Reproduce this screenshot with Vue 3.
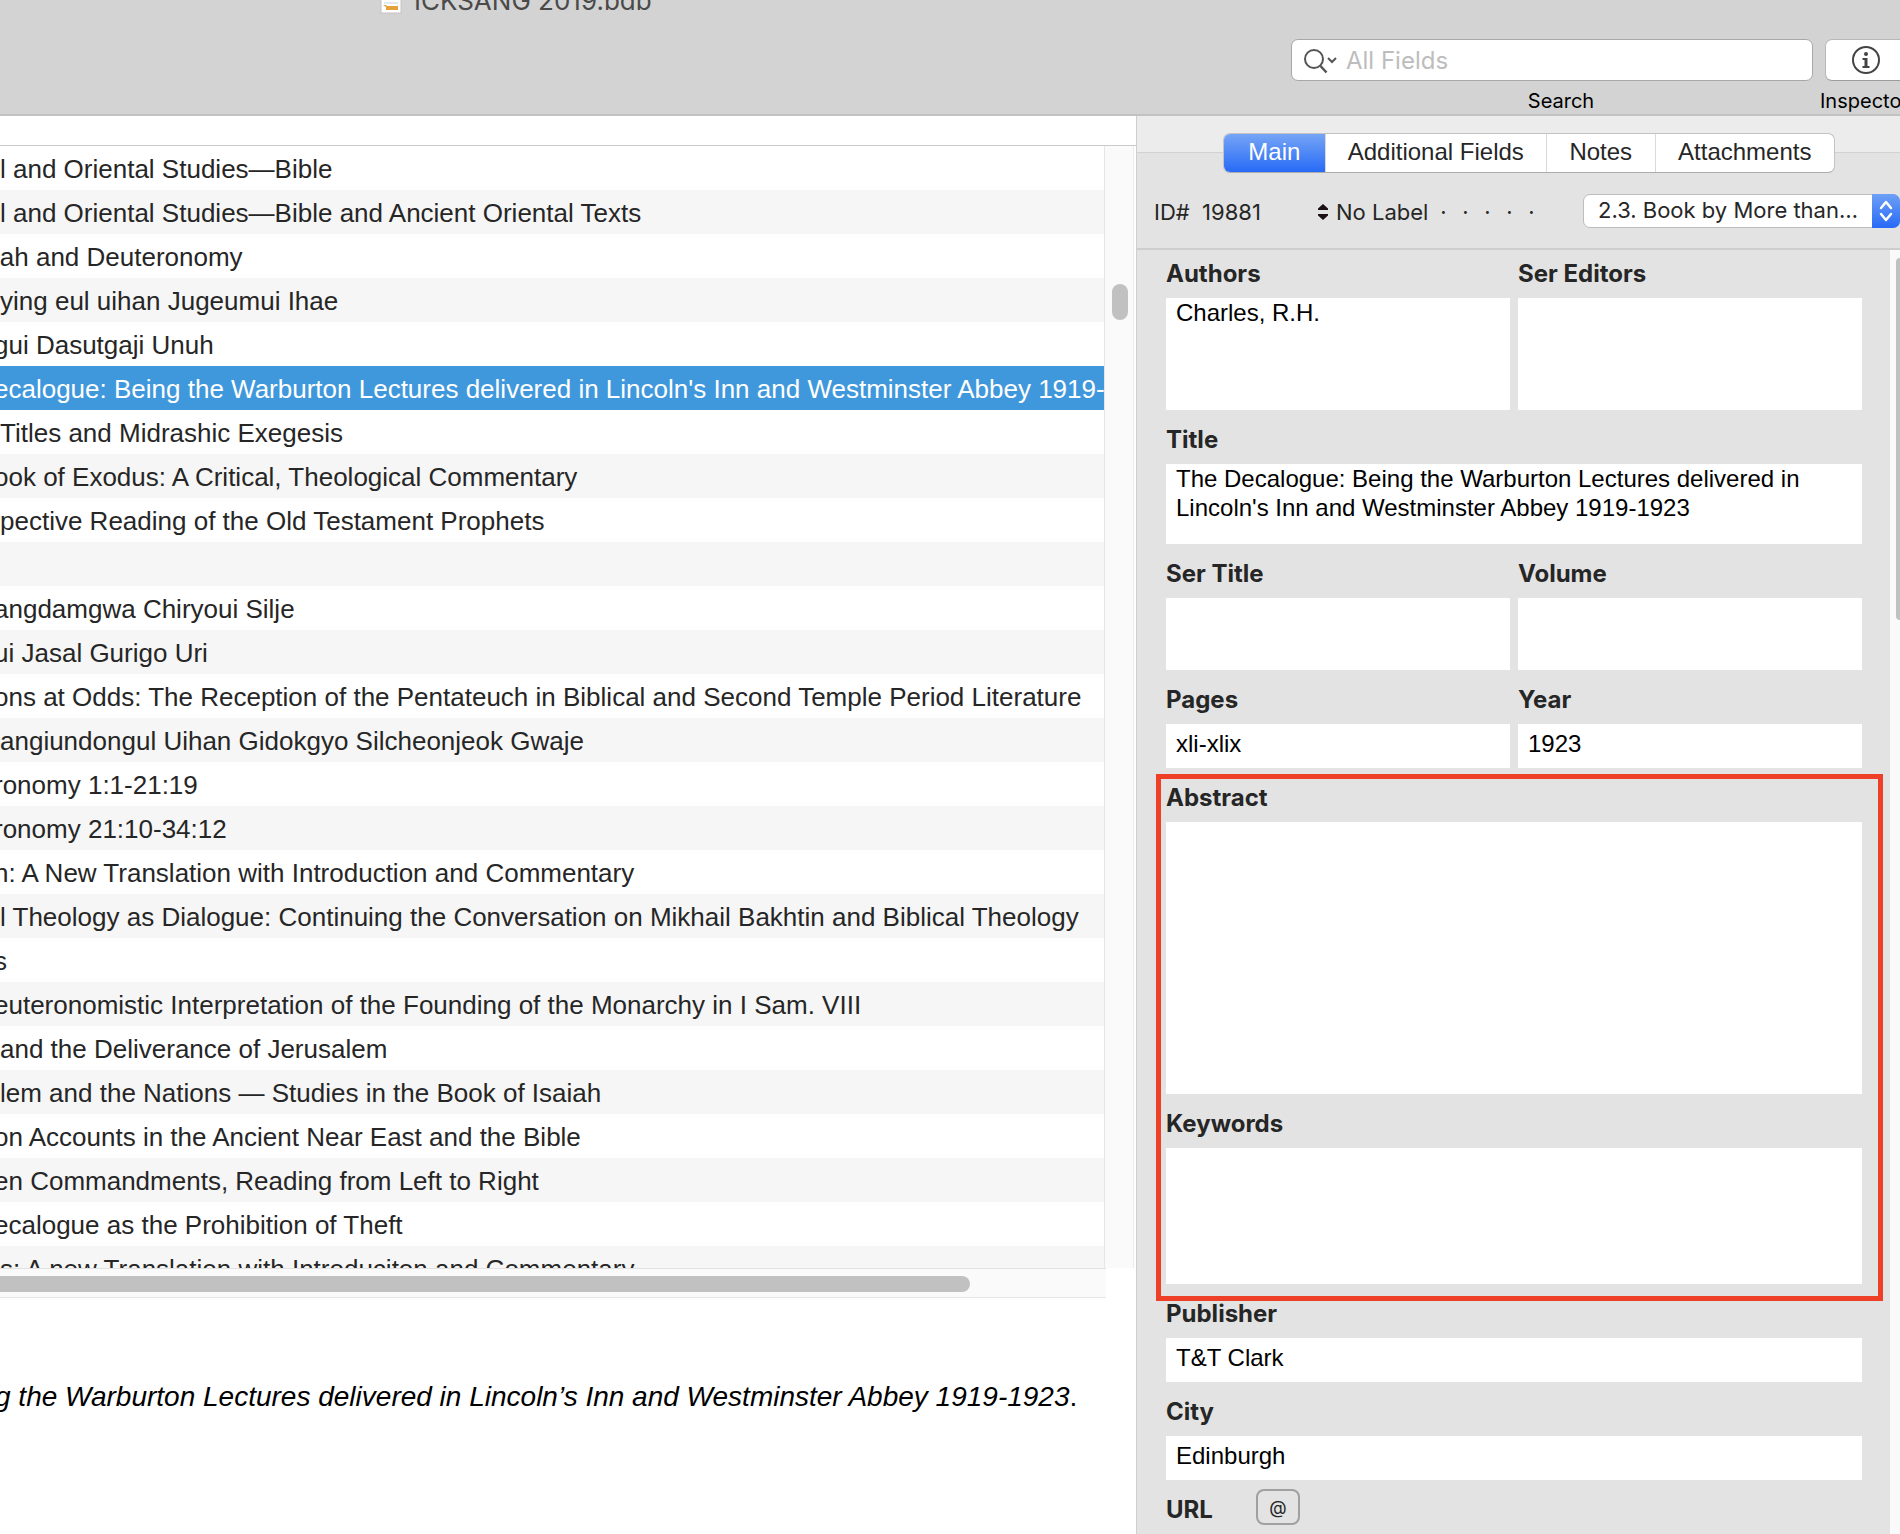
<script setup>
import { ref } from 'vue'

const references = [
  { title: 'l and Oriental Studies—Bible' },
  { title: 'l and Oriental Studies—Bible and Ancient Oriental Texts' },
  { title: 'iah and Deuteronomy', cut: true },
  { title: 'ying eul uihan Jugeumui Ihae' },
  { title: 'gui Dasutgaji Unuh', cut: true },
  { title: "ecalogue: Being the Warburton Lectures delivered in Lincoln's Inn and Westminster Abbey 1919-", cut: true },
  { title: 'Titles and Midrashic Exegesis' },
  { title: 'ook of Exodus: A Critical, Theological Commentary', cut: true },
  { title: 'pective Reading of the Old Testament Prophets' },
  { title: '' },
  { title: 'angdamgwa Chiryoui Silje', cut: true },
  { title: 'ui Jasal Gurigo Uri', cut: true },
  { title: 'ons at Odds: The Reception of the Pentateuch in Biblical and Second Temple Period Literature', cut: true },
  { title: 'angiundongul Uihan Gidokgyo Silcheonjeok Gwaje' },
  { title: 'ronomy 1:1-21:19', cut: true },
  { title: 'ronomy 21:10-34:12', cut: true },
  { title: 'n: A New Translation with Introduction and Commentary', cut: true },
  { title: 'l Theology as Dialogue: Continuing the Conversation on Mikhail Bakhtin and Biblical Theology' },
  { title: 's', cut: true },
  { title: 'euteronomistic Interpretation of the Founding of the Monarchy in I Sam. VIII', cut: true },
  { title: 'and the Deliverance of Jerusalem' },
  { title: 'lem and the Nations — Studies in the Book of Isaiah' },
  { title: 'on Accounts in the Ancient Near East and the Bible', cut: true },
  { title: 'en Commandments, Reading from Left to Right', cut: true },
  { title: 'ecalogue as the Prohibition of Theft', cut: true },
  { title: 's: A new Translation with Introduciton and Commentary' },
]
const selected = ref(5)

const tabs = ['Main', 'Additional Fields', 'Notes', 'Attachments']
const activeTab = ref('Main')

const search = ref('')
const record = ref({
  authors: 'Charles, R.H.',
  serEditors: '',
  title: "The Decalogue: Being the Warburton Lectures delivered in Lincoln's Inn and Westminster Abbey 1919-1923",
  serTitle: '',
  volume: '',
  pages: 'xli-xlix',
  year: '1923',
  abstract: '',
  keywords: '',
  publisher: 'T&T Clark',
  city: 'Edinburgh',
})
</script>

<template>
  <div class="window">
    <header class="toolbar">
      <div class="doc-title">
        <svg class="doc-icon" width="22" height="26" viewBox="0 0 22 26" aria-hidden="true">
          <rect x="1" y="0" width="20" height="25" fill="#fff" stroke="#c4c4c4" />
          <path d="M4 11h14M4 15h14" stroke="#c9d3dc" stroke-width="1" />
          <path d="M3 17h3l1 1h11v4H6v-3z" fill="#e5a23c" />
        </svg>
        <span>ICKSANG 2019.bdb</span>
      </div>
      <div class="tool search-tool">
        <div class="search-box">
          <svg width="36" height="30" viewBox="0 0 36 30" fill="none" stroke="#555" stroke-width="2" aria-hidden="true">
            <circle cx="10" cy="14" r="9" />
            <path d="M16.500 21l6 6.500" stroke-width="2.500" />
            <path d="M24 13l4 4 4-4" />
          </svg>
          <input id="search" v-model="search" type="text" placeholder="All Fields" />
        </div>
        <label for="search" class="search-label">Search</label>
      </div>
      <div class="tool inspector-tool">
        <button id="inspector" type="button" class="inspector-button" aria-label="Inspector">
          <svg width="30" height="30" viewBox="0 0 30 30" aria-hidden="true">
            <circle cx="15" cy="15" r="13" fill="none" stroke="#444" stroke-width="2" />
            <circle cx="15" cy="9" r="2" fill="#444" />
            <path d="M11.500 13h5v8h2v2h-7v-2h2v-6h-2z" fill="#444" />
          </svg>
        </button>
        <label for="inspector">Inspector</label>
      </div>
    </header>

    <div class="body">
      <main class="library">
        <div class="list-header"></div>
        <div class="list">
          <div class="rows">
            <table>
              <tbody>
                <tr
                  v-for="(item, i) in references"
                  :key="i"
                  :class="{ selected: i === selected }"
                  @click="selected = i"
                >
                  <td :class="{ cut: item.cut }">{{ item.title }}</td>
                </tr>
              </tbody>
            </table>
          </div>
          <div class="v-track"><div class="v-thumb"></div></div>
        </div>
        <div class="h-track"><div class="h-thumb"></div></div>
        <section class="preview">
          <p><em>g the Warburton Lectures delivered in Lincoln’s Inn and Westminster Abbey 1919-1923</em>.</p>
        </section>
      </main>

      <aside class="inspector">
        <nav class="tab-bar">
          <div class="tabs">
            <button
              v-for="tab in tabs"
              :key="tab"
              type="button"
              :class="{ active: tab === activeTab }"
              @click="activeTab = tab"
            >{{ tab }}</button>
          </div>
        </nav>

        <div class="meta">
          <span class="record-id">ID#&nbsp; 19881</span>
          <button type="button" class="label-button">
            <svg width="10" height="16" viewBox="0 0 10 16" fill="#1d1013" aria-hidden="true">
              <path d="M5 0l5 4.500V6H0V4.500z" />
              <path d="M5 16l5-4.500V10H0v1.500z" />
            </svg>
            No Label
          </button>
          <span class="dots"><i v-for="n in 5" :key="n">·</i></span>
          <div class="type-select">
            <select aria-label="Reference type">
              <option>2.3. Book by More than…</option>
            </select>
            <span class="cap">
              <svg width="14" height="22" viewBox="0 0 14 22" fill="none" stroke="#fff" stroke-width="2.500" stroke-linecap="round" stroke-linejoin="round" aria-hidden="true">
                <path d="M2 8l5-6 5 6M2 14l5 6 5-6" />
              </svg>
            </span>
          </div>
        </div>

        <div class="form-area">
          <form class="fields" @submit.prevent>
            <div class="pair">
              <div class="field">
                <label for="authors">Authors</label>
                <textarea id="authors" v-model="record.authors" class="h-authors"></textarea>
              </div>
              <div class="field">
                <label for="ser-editors">Ser Editors</label>
                <textarea id="ser-editors" v-model="record.serEditors" class="h-authors"></textarea>
              </div>
            </div>
            <div class="field">
              <label for="title">Title</label>
              <textarea id="title" v-model="record.title" class="h-title"></textarea>
            </div>
            <div class="pair">
              <div class="field">
                <label for="ser-title">Ser Title</label>
                <textarea id="ser-title" v-model="record.serTitle" class="h-series"></textarea>
              </div>
              <div class="field">
                <label for="volume">Volume</label>
                <textarea id="volume" v-model="record.volume" class="h-series"></textarea>
              </div>
            </div>
            <div class="pair">
              <div class="field">
                <label for="pages">Pages</label>
                <input id="pages" v-model="record.pages" type="text" />
              </div>
              <div class="field">
                <label for="year">Year</label>
                <input id="year" v-model="record.year" type="text" />
              </div>
            </div>
            <div class="marked">
              <div class="field">
                <label for="abstract">Abstract</label>
                <textarea id="abstract" v-model="record.abstract" class="h-abstract"></textarea>
              </div>
              <div class="field">
                <label for="keywords">Keywords</label>
                <textarea id="keywords" v-model="record.keywords" class="h-keywords"></textarea>
              </div>
            </div>
            <div class="field">
              <label for="publisher">Publisher</label>
              <input id="publisher" v-model="record.publisher" type="text" />
            </div>
            <div class="field">
              <label for="city">City</label>
              <input id="city" v-model="record.city" type="text" />
            </div>
            <div class="url-row">
              <label for="open-url">URL</label>
              <button id="open-url" type="button">@</button>
            </div>
          </form>
          <div class="form-track"><div class="form-thumb"></div></div>
        </div>
      </aside>
    </div>
  </div>
</template>

<style>
body {
  margin: 0;
  overflow: hidden;
}
</style>

<style scoped>
* {
  box-sizing: border-box;
}
.window {
  display: flex;
  flex-direction: column;
  height: 100vh;
  overflow: hidden;
  background: #fff;
  color: #262626;
  font-family: "Liberation Sans", Arial, sans-serif;
  font-size: 24px;
}
button,
input,
select,
textarea {
  margin: 0;
  padding: 0;
  border: 0;
  border-radius: 0;
  outline: 0;
  background: none;
  color: inherit;
  font: inherit;
}
svg {
  display: block;
  flex: none;
}

/* Toolbar */
.toolbar {
  display: flex;
  flex: none;
  gap: 12px;
  height: 116px;
  overflow: hidden;
  background: #d3d3d3;
  border-bottom: 2px solid #c2c2c2;
  font-family: Inter, sans-serif;
}
.doc-title {
  display: flex;
  flex: 1;
  gap: 12px;
  align-items: center;
  height: 32px;
  margin: -15px 0 0 20%;
  color: #4a4a4a;
  font-size: 26px;
  line-height: 32px;
  white-space: nowrap;
}
.tool {
  display: flex;
  flex: none;
  flex-direction: column;
  gap: 8px;
  padding-top: 39px;
  color: #000;
  font-size: 20px;
  line-height: 24px;
}
.search-tool {
  width: 522px;
}
.search-box {
  display: flex;
  gap: 6px;
  align-items: center;
  height: 42px;
  padding: 0 12px;
  background: #fff;
  border: 1px solid #a8a8a8;
  border-radius: 7px;
}
.search-box input {
  flex: 1;
  min-width: 0;
  font-size: 24px;
}
.search-box input::placeholder {
  color: #bdbdbd;
  opacity: 1;
}
.search-label {
  padding-left: 18px;
  text-align: center;
}
.inspector-tool {
  width: 75px;
}
.inspector-tool label {
  margin-left: -5px;
}
.inspector-button {
  display: grid;
  place-items: center;
  width: 82px;
  height: 42px;
  background: #fff;
  border: 1px solid #b8b8b8;
  border-bottom-color: #9c9c9c;
  border-radius: 7px;
}

/* Library list */
.body {
  display: flex;
  flex: 1;
  min-height: 0;
}
.library {
  display: flex;
  flex: 1;
  flex-direction: column;
  min-width: 0;
}
.list-header {
  flex: none;
  height: 30px;
  border-bottom: 1px solid #cbcbcb;
}
.list {
  display: flex;
  flex: 1;
  min-height: 0;
}
.rows {
  flex: 1;
  min-width: 0;
  overflow: hidden;
}
table {
  width: 100%;
  table-layout: fixed;
  border-collapse: collapse;
}
td {
  height: 44px;
  padding: 2px 0 0;
  font-size: 26px;
  line-height: 42px;
  white-space: nowrap;
}
td.cut {
  text-indent: -6px;
}
tr:nth-child(even) {
  background: #f6f6f6;
}
tr.selected {
  background: #4098dc;
  color: #fff;
}
.v-track {
  flex: none;
  width: 30px;
  margin-right: 2px;
  padding: 138px 5px 0 7px;
  background: #fafafa;
  border-left: 1px solid #e6e6e6;
  border-right: 1px solid #ececec;
}
.v-thumb {
  width: 16px;
  height: 36px;
  background: #c1c1c1;
  border-radius: 8px;
}
.h-track {
  flex: none;
  height: 30px;
  margin-right: 30px;
  padding-top: 7px;
  background: #fafafa;
  border-top: 1px solid #e2e2e2;
  border-bottom: 1px solid #e6e6e6;
}
.h-thumb {
  width: 970px;
  max-width: 100%;
  height: 16px;
  background: #c1c1c1;
  border-radius: 0 8px 8px 0;
}
.preview {
  flex: none;
  height: 236px;
  padding-top: 81px;
  overflow: hidden;
  color: #000;
  font-size: 28px;
  line-height: 36px;
  white-space: nowrap;
}
.preview p {
  margin: 0;
  text-indent: -5px;
}

/* Inspector */
.inspector {
  display: flex;
  flex: none;
  flex-direction: column;
  width: 764px;
  background: #e3e3e3;
  border-left: 1px solid #cfcfcf;
}
.tab-bar {
  flex: none;
  height: 62px;
  padding: 17px 0 0 86px;
  background: linear-gradient(#ececec 36px, #d2d2d2 36px, #d2d2d2 37px, #e3e3e3 37px);
}
.tabs {
  display: grid;
  grid-template-columns: 101fr 222fr 109fr 180fr;
  width: 612px;
  height: 40px;
  overflow: hidden;
  background: #fff;
  border: 1px solid #c3c3c3;
  border-bottom-color: #acacac;
  border-radius: 7px;
}
.tabs button {
  padding-bottom: 2px;
  border-left: 1px solid #d9d9d9;
}
.tabs button.active {
  border-left: 0;
  background: linear-gradient(#76a5f6, #276af6);
  color: #fff;
}
.meta {
  display: flex;
  flex: none;
  align-items: center;
  height: 72px;
  padding: 0 0 2px 17px;
  border-bottom: 2px solid #cdcdcd;
  font-family: Inter, sans-serif;
  font-size: 22px;
  white-space: nowrap;
}
.record-id {
  width: 164px;
}
.label-button {
  display: flex;
  gap: 8px;
  align-items: center;
}
.dots {
  display: flex;
  margin-left: 4px;
}
.dots i {
  width: 22px;
  font-style: normal;
  text-align: center;
}
.type-select {
  position: relative;
  width: 317px;
  height: 34px;
  margin: 0 0 3px auto;
}
.type-select select {
  width: 100%;
  height: 100%;
  padding: 0 32px 2px 14px;
  background: #fff;
  border: 1px solid #bdbdbd;
  border-radius: 7px;
  appearance: none;
}
.type-select .cap {
  position: absolute;
  top: 0;
  right: 0;
  bottom: 0;
  display: grid;
  place-items: center;
  width: 28px;
  background: linear-gradient(#6ea0f6, #276af6);
  border-radius: 0 7px 7px 0;
  pointer-events: none;
}
.form-area {
  display: flex;
  flex: 1;
  min-height: 0;
}
.fields {
  display: flex;
  flex: 1;
  flex-direction: column;
  gap: 6px;
  min-width: 0;
  padding: 0 28px 0 29px;
}
.pair {
  display: grid;
  grid-template-columns: 1fr 1fr;
  gap: 8px;
}
.field {
  display: flex;
  flex-direction: column;
}
.field label,
.url-row label {
  height: 48px;
  font-family: Inter, sans-serif;
  font-weight: 700;
  line-height: 48px;
}
.field input,
.field textarea {
  width: 100%;
  height: 44px;
  padding: 0 10px;
  background: #fff;
  color: #000;
  line-height: 29px;
  resize: none;
  overflow: hidden;
}
.field input {
  padding-bottom: 4px;
}
.field .h-authors {
  height: 112px;
}
.field .h-title {
  height: 80px;
}
.field .h-series {
  height: 72px;
}
.field .h-abstract {
  height: 272px;
}
.field .h-keywords {
  height: 136px;
}
.marked {
  position: relative;
  display: flex;
  flex-direction: column;
  gap: 6px;
}
.marked::after {
  content: "";
  position: absolute;
  inset: 0 -21px -17px -10px;
  border: 5px solid #ee3f27;
  pointer-events: none;
}
.url-row {
  display: flex;
  align-items: flex-start;
}
.url-row label {
  width: 90px;
}
.url-row button {
  width: 44px;
  height: 36px;
  margin-top: 3px;
  border: 2px solid #a0a0a0;
  border-radius: 8px;
  font-family: Inter, sans-serif;
  font-size: 18px;
}
.form-track {
  flex: none;
  width: 10px;
  padding: 8px 0 0 6px;
  background: #fafafa;
}
.form-thumb {
  height: 362px;
  background: #c1c1c1;
  border-radius: 8px 0 0 8px;
}
</style>
